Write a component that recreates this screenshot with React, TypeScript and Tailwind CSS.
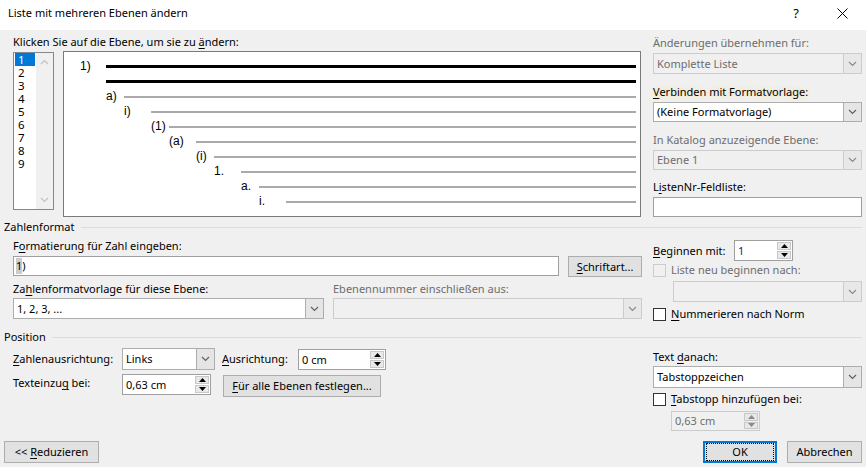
import React from "react";

const ui = "font-['Noto_Sans',sans-serif]";

// chevron used in combo boxes and the level list scrollbar
function Chevron({ up = false, color = "#606060" }: { up?: boolean; color?: string }) {
    return (
        <svg width="9" height="6" viewBox="0 0 9 6">
            <polyline
                points={up ? "1,5 4.5,1.5 8,5" : "1,1 4.5,4.5 8,1"}
                fill="none"
                stroke={color}
                strokeWidth="1.2"
            />
        </svg>
    );
}

function Combo({
    value = "",
    disabled = false,
    className = "",
}: {
    value?: string;
    disabled?: boolean;
    className?: string;
}) {
    return (
        <div
            className={`flex border ${
                disabled ? "border-[#cccccc] bg-[#f0f0f0] text-[#6d6d6d]" : "border-[#adadad] bg-white text-black"
            } ${className}`}
        >
            <div className="flex-1 flex items-center pl-[3px] whitespace-nowrap overflow-hidden">{value}</div>
            <div
                className={`w-[18px] flex items-center justify-center border-l ${
                    disabled ? "border-[#cccccc] bg-[#e8e8e8]" : "border-[#adadad] bg-[#e5e5e5]"
                }`}
            >
                <Chevron color={disabled ? "#8a8a8a" : "#606060"} />
            </div>
        </div>
    );
}

function Spin({ value, disabled = false, className = "" }: { value: string; disabled?: boolean; className?: string }) {
    const arrow = disabled ? "#8a8a8a" : "#000";
    return (
        <div
            className={`flex border ${disabled ? "border-[#cccccc] bg-[#f0f0f0] text-[#6d6d6d]" : "border-[#a0a0a0] bg-white"} ${className}`}
        >
            <div className="flex-1 flex items-center pl-[3px] whitespace-nowrap">{value}</div>
            <div className="w-[16px] flex flex-col p-px gap-px">
                <div className="flex-1 flex items-center justify-center border border-[#c8c8c8] bg-[#e8e8e8]">
                    <svg width="7" height="4" viewBox="0 0 7 4">
                        <polygon points="0,4 3.5,0 7,4" fill={arrow} />
                    </svg>
                </div>
                <div className="flex-1 flex items-center justify-center border border-[#c8c8c8] bg-[#e8e8e8]">
                    <svg width="7" height="4" viewBox="0 0 7 4">
                        <polygon points="0,0 7,0 3.5,4" fill={arrow} />
                    </svg>
                </div>
            </div>
        </div>
    );
}

function Button({ children, className = "", focused = false }: { children: React.ReactNode; className?: string; focused?: boolean }) {
    return (
        <div
            className={`flex items-center justify-center bg-[#e1e1e1] ${
                focused ? "border-2 border-[#0078d7]" : "border border-[#adadad]"
            } ${className}`}
        >
            {focused ? (
                <div className="w-full h-full flex items-center justify-center border border-dotted border-black m-px">{children}</div>
            ) : (
                children
            )}
        </div>
    );
}

function Check({ label, disabled = false }: { label: React.ReactNode; disabled?: boolean }) {
    return (
        <div className={`flex items-center h-[16px] ${disabled ? "text-[#6d6d6d]" : ""}`}>
            <div className={`w-[13px] h-[13px] border ${disabled ? "border-[#cccccc] bg-[#f0f0f0]" : "border-[#333333] bg-white"}`} />
            <span className="ml-[5px]">{label}</span>
        </div>
    );
}

function SectionHeader({ title }: { title: string }) {
    return (
        <div className="flex items-center h-[16px] pl-[4px] pr-[4px]">
            <span>{title}</span>
            <div className="flex-1 h-px bg-[#dcdcdc] ml-[6px]" />
        </div>
    );
}

// number preview rows: label, label x, line x
const levels: { label: string; lx: number; ix: number; bold?: boolean }[] = [
    { label: "1)", lx: 80, ix: 106, bold: true },
    { label: "", lx: 80, ix: 106, bold: true },
    { label: "a)", lx: 106, ix: 124 },
    { label: "i)", lx: 124, ix: 151 },
    { label: "(1)", lx: 151, ix: 169 },
    { label: "(a)", lx: 169, ix: 196 },
    { label: "(i)", lx: 196, ix: 214 },
    { label: "1.", lx: 214, ix: 241 },
    { label: "a.", lx: 241, ix: 259 },
    { label: "i.", lx: 259, ix: 286 },
];

export default function App() {
    return (
        <div className={`w-[866px] h-[467px] overflow-hidden bg-[#f0f0f0] text-[11px] leading-[16px] text-black ${ui}`}>
            {/* title bar */}
            <div className="h-[30px] bg-white flex items-center pl-[8px]">
                <span className="flex-1 -mt-[4px]">Liste mit mehreren Ebenen ändern</span>
                <span className="w-[20px] text-center -mt-[4px] text-[13px]">?</span>
                <div className="w-[48px] flex justify-center -mt-[4px] ml-[12px]">
                    <svg width="11" height="11" viewBox="0 0 11 11">
                        <path d="M0.5 0.5 L10.5 10.5 M10.5 0.5 L0.5 10.5" stroke="#000" strokeWidth="1" />
                    </svg>
                </div>
            </div>

            {/* top: levels and preview */}
            <div className="flex pl-[13px]">
                <div className="w-[629px] flex flex-col">
                    <div className="mt-[4px]">
                        Klicken Sie auf die Ebene, um sie zu <u className="underline-offset-2">ä</u>ndern:
                    </div>
                    <div className="flex items-start mt-[1px]">
                        <div className="w-[41px] h-[158px] mt-[1px] border border-[#828790] bg-white flex">
                            <div className="flex-1 flex flex-col text-[11.5px]">
                                {["1", "2", "3", "4", "5", "6", "7", "8", "9"].map((n, i) => (
                                    <div
                                        key={n}
                                        className={`h-[13px] leading-[13px] ml-px w-[20px] pl-[3px] ${
                                            i === 0 ? "bg-[#0078d7] text-white" : ""
                                        }`}
                                    >
                                        {n}
                                    </div>
                                ))}
                            </div>
                            <div className="w-[17px] bg-[#f0f0f0] flex flex-col items-center justify-between py-[6px]">
                                <Chevron up color="#c2c2c2" />
                                <Chevron color="#c2c2c2" />
                            </div>
                        </div>
                        <div className="ml-[9px] w-[578px] h-[166px] border border-[#7a7a7a] bg-white pt-[7px] text-[12px] font-['Liberation_Sans',sans-serif]">
                            {levels.map((l, i) => (
                                <div key={i} className="h-[15px] flex items-center">
                                    <div style={{ marginLeft: l.lx - 64, width: l.ix - l.lx }} className="leading-[15px]">
                                        {l.label}
                                    </div>
                                    <div className={`flex-1 mr-[4px] ${l.bold ? "h-[3px] bg-black" : "h-[2px] bg-[#aaaaaa]"}`} />
                                </div>
                            ))}
                        </div>
                    </div>
                </div>
                <div className="ml-[11px] w-[209px] flex flex-col">
                    <div className="mt-[5px] text-[#6d6d6d]">Änderungen übernehmen für:</div>
                    <Combo disabled value="Komplette Liste" className="mt-[2px] h-[21px]" />
                    <div className="mt-[10px]">
                        <span className="[text-shadow:0_0_6px_#ffdd88]">
                            <u className="underline-offset-2">V</u>erbinden mit Formatvorlage:
                        </span>
                    </div>
                    <Combo value="(Keine Formatvorlage)" className="mt-[2px] h-[20px]" />
                    <div className="mt-[10px] text-[#6d6d6d]">In Katalog anzuzeigende Ebene:</div>
                    <Combo disabled value="Ebene 1" className="mt-[2px] h-[20px]" />
                    <div className="mt-[9px]">
                        L<u className="underline-offset-2">i</u>stenNr-Feldliste:
                    </div>
                    <div className="mt-[2px] h-[20px] border border-[#a0a0a0] bg-white" />
                </div>
            </div>

            {/* Zahlenformat */}
            <div className="mt-[2px]">
                <SectionHeader title="Zahlenformat" />
            </div>
            <div className="flex pl-[13px]">
                <div className="w-[629px] flex flex-col">
                    <div className="mt-[3px]">
                        F<u className="underline-offset-2">o</u>rmatierung für Zahl eingeben:
                    </div>
                    <div className="flex mt-[2px] items-start">
                        <div className="w-[547px] h-[20px] border border-[#a0a0a0] bg-white flex items-center pl-[2px]">
                            <span className="bg-[#cccccc]">1</span>
                            <span>)</span>
                        </div>
                        <Button className="ml-[9px] w-[74px] h-[21px]">
                            <span>
                                <u className="underline-offset-2">S</u>chriftart...
                            </span>
                        </Button>
                    </div>
                    <div className="flex mt-[4px]">
                        <div className="w-[310px]">
                            Za<u className="underline-offset-2">h</u>lenformatvorlage für diese Ebene:
                        </div>
                        <div className="ml-[10px] text-[#6d6d6d]">Ebenennummer einschließen aus:</div>
                    </div>
                    <div className="flex mt-[1px]">
                        <Combo value="1, 2, 3, ..." className="w-[311px] h-[21px]" />
                        <Combo disabled className="ml-[9px] w-[310px] h-[21px]" />
                    </div>
                </div>
                <div className="ml-[11px] w-[209px] flex flex-col">
                    <div className="mt-[5px] flex items-center h-[21px]">
                        <div className="w-[81px]">
                            <u className="underline-offset-2">B</u>eginnen mit:
                        </div>
                        <Spin value="1" className="w-[59px] h-[21px] text-[#4b0a5e]" />
                    </div>
                    <div className="mt-[1px]">
                        <Check disabled label="Liste neu beginnen nach:" />
                    </div>
                    <Combo disabled className="mt-[3px] ml-[20px] h-[21px]" />
                    <div className="mt-[4px]">
                        <Check
                            label={
                                <span>
                                    <u className="underline-offset-2">N</u>ummerieren nach Norm
                                </span>
                            }
                        />
                    </div>
                </div>
            </div>

            {/* Position */}
            <div className="mt-[7px]">
                <SectionHeader title="Position" />
            </div>
            <div className="flex pl-[13px]">
                <div className="w-[629px] flex flex-col">
                    <div className="flex items-start mt-[3px]">
                        <div className="w-[109px] h-[21px] flex items-center">
                            <span>
                                <u className="underline-offset-2">Z</u>ahlenausrichtung:
                            </span>
                        </div>
                        <Combo value="Links" className="w-[93px] h-[22px]" />
                        <div className="ml-[7px] w-[76px] h-[21px] flex items-center">
                            <span>
                                <u className="underline-offset-2">A</u>usrichtung:
                            </span>
                        </div>
                        <Spin value="0 cm" className="mt-[1px] w-[88px] h-[21px]" />
                    </div>
                    <div className="flex items-start mt-[4px]">
                        <div className="w-[109px] h-[18px] flex items-center">
                            <span>
                                Texteinzu<u className="underline-offset-2">g</u> bei:
                            </span>
                        </div>
                        <Spin value="0,63 cm" className="w-[89px] h-[21px]" />
                        <Button className="ml-[12px] mt-[1px] w-[158px] h-[22px]">
                            <span>
                                <u className="underline-offset-2">F</u>ür alle Ebenen festlegen...
                            </span>
                        </Button>
                    </div>
                </div>
                <div className="ml-[11px] w-[209px] flex flex-col">
                    <div className="mt-[4px]">
                        Text <u className="underline-offset-2">d</u>anach:
                    </div>
                    <Combo value="Tabstoppzeichen" className="mt-[1px] h-[22px]" />
                    <div className="mt-[3px]">
                        <Check
                            label={
                                <span>
                                    <u className="underline-offset-2">T</u>abstopp hinzufügen bei:
                                </span>
                            }
                        />
                    </div>
                    <Spin disabled value="0,63 cm" className="mt-[4px] ml-[18px] w-[89px] h-[20px]" />
                </div>
            </div>

            {/* bottom buttons */}
            <div className="flex mt-[10px] pl-[4px]">
                <Button className="w-[95px] h-[22px]">
                    <span>
                        &lt;&lt; <u className="underline-offset-2">R</u>eduzieren
                    </span>
                </Button>
                <div className="flex-1" />
                <Button focused className="w-[74px] h-[22px]">
                    OK
                </Button>
                <Button className="ml-[10px] mr-[4px] w-[75px] h-[22px]">Abbrechen</Button>
            </div>
        </div>
    );
}
